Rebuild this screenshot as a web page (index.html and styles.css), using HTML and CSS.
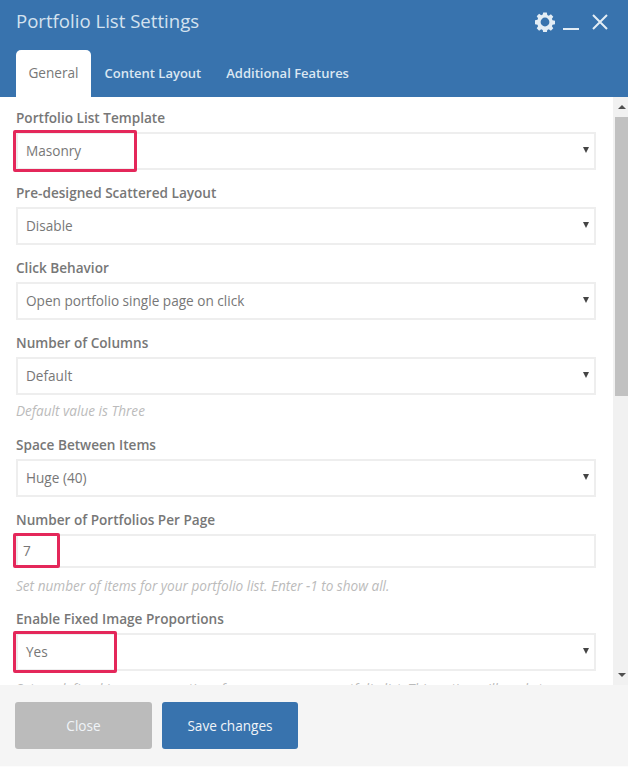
FILE: index.html
```html
<!DOCTYPE html>
<html>
<head>
	<meta charset="utf-8">
	<title>Portfolio List Settings</title>
	<link rel="stylesheet" href="styles.css">
</head>
<body>
	<div class="dialog">
		<div class="cabecera">
			<div class="titulo_fila">
				<span class="titulo">Portfolio List Settings</span>
				<div class="iconos">
					<svg class="icono" width="20" height="20" viewBox="0 0 20 20">
						<path fill="#e3edf5" fill-rule="evenodd" d="M8.2 0.6h3.6l0.5 2.5 1.5 0.6 2.1-1.4 2.4 2.4-1.4 2.1 0.6 1.5 2.5 0.5v3.4l-2.5 0.5-0.6 1.5 1.4 2.1-2.4 2.4-2.1-1.4-1.5 0.6-0.5 2.5H8.2l-0.5-2.5-1.5-0.6-2.1 1.4-2.4-2.4 1.4-2.1-0.6-1.5-2.5-0.5V8.3l2.5-0.5 0.6-1.5-1.4-2.1 2.4-2.4 2.1 1.4 1.5-0.6zM10 5.6a4.4 4.4 0 1 0 0 8.8 4.4 4.4 0 0 0 0-8.8z"/>
					</svg>
					<span class="minimizar"></span>
					<svg class="icono" width="18" height="18" viewBox="0 0 18 18">
						<path stroke="#e3edf5" stroke-width="2" fill="none" d="M2 2l14 14M16 2L2 16"/>
					</svg>
				</div>
			</div>
			<div class="tabs">
				<span class="tab activo">General</span>
				<span class="tab">Content Layout</span>
				<span class="tab">Additional Features</span>
			</div>
		</div>
		<div class="cuerpo">
			<div class="contenido">
				<div class="campo">
					<div class="etiq">Portfolio List Template</div>
					<div class="caja">Masonry<i class="flecha"></i><span class="marca marca_masonry"></span></div>
				</div>
				<div class="campo">
					<div class="etiq">Pre-designed Scattered Layout</div>
					<div class="caja">Disable<i class="flecha"></i></div>
				</div>
				<div class="campo">
					<div class="etiq">Click Behavior</div>
					<div class="caja">Open portfolio single page on click<i class="flecha"></i></div>
				</div>
				<div class="campo">
					<div class="etiq">Number of Columns</div>
					<div class="caja">Default<i class="flecha"></i></div>
					<div class="ayuda">Default value is Three</div>
				</div>
				<div class="campo">
					<div class="etiq">Space Between Items</div>
					<div class="caja">Huge (40)<i class="flecha"></i></div>
				</div>
				<div class="campo">
					<div class="etiq">Number of Portfolios Per Page</div>
					<div class="caja caja_texto">7<span class="marca marca_siete"></span></div>
					<div class="ayuda">Set number of items for your portfolio list. Enter -1 to show all.</div>
				</div>
				<div class="campo">
					<div class="etiq">Enable Fixed Image Proportions</div>
					<div class="caja">Yes<i class="flecha"></i><span class="marca marca_yes"></span></div>
					<div class="ayuda ayuda_cortada">Set predefined image proportions for your masonry portfolio list. This option will apply to</div>
				</div>
			</div>
			<div class="barra">
				<div class="barra_btn"><i class="flecha_arriba"></i></div>
				<div class="barra_pista"><div class="barra_thumb"></div></div>
				<div class="barra_btn"><i class="flecha_abajo"></i></div>
			</div>
		</div>
		<div class="pie">
			<button class="clsboton cerrar">Close</button>
			<button class="clsboton guardar">Save changes</button>
		</div>
	</div>
</body>
</html>
```

FILE: styles.css
```css
* {
	box-sizing: border-box;
}

html, body {
	margin: 0;
	height: 100%;
}

body {
	font-family: "Open Sans", sans-serif;
	background: white;
}

.dialog {
	width: 628px;
	height: 767px;
	display: flex;
	flex-flow: column;
}

.cabecera {
	height: 97px;
	flex: none;
	background: #3873ae;
	padding: 0 16px;
	display: flex;
	flex-flow: column;
	justify-content: space-between;
}

.titulo_fila {
	display: flex;
	justify-content: space-between;
	align-items: flex-start;
}

.titulo {
	margin-top: 8px;
	font-size: 18.6px;
	line-height: 26px;
	color: #d4e2ef;
}

.iconos {
	margin-top: 12px;
	display: flex;
	align-items: center;
	gap: 8px;
	margin-right: 3px;
}

.minimizar {
	width: 16px;
	height: 2px;
	margin-top: 14px;
	margin-right: 4px;
	background: #e3edf5;
}

.tabs {
	display: flex;
	height: 47px;
}

.tab {
	padding: 0 12.5px;
	font-size: 13px;
	font-weight: 600;
	line-height: 46px;
	color: #dbe7f2;
}

.tab.activo {
	width: 75px;
	margin-right: 1px;
	background: white;
	border-radius: 5px 5px 0 0;
	font-size: 13.6px;
	font-weight: 400;
	color: #777;
	text-align: center;
	padding: 0;
}

.cuerpo {
	flex: 1;
	min-height: 0;
	display: flex;
	overflow: hidden;
}

.contenido {
	flex: 1;
	padding: 1px 17px 0 16px;
}

.campo {
	padding-top: 11px;
	padding-bottom: 3px;
}

.etiq {
	font-size: 13.6px;
	font-weight: 600;
	line-height: 18px;
	color: #777;
	margin-bottom: 5px;
}

.caja {
	position: relative;
	height: 38px;
	padding: 0 8px;
	border: 2px solid #eeeeee;
	font-size: 13.6px;
	line-height: 34px;
	color: #777;
}

.caja_texto {
	height: 34px;
	line-height: 30px;
	padding: 0 5px;
}

.flecha {
	position: absolute;
	right: 5px;
	top: 13px;
	border-style: solid;
	border-width: 6px 3px 0;
	border-color: #444 transparent transparent;
}

.marca {
	position: absolute;
	top: -4px;
	left: -5px;
	bottom: -4px;
	border: 3px solid #e4275a;
	border-radius: 2px;
}

.marca_masonry {
	width: 124px;
}

.marca_siete {
	width: 47px;
	top: -3px;
	bottom: -2px;
}

.marca_yes {
	width: 104px;
}

.ayuda {
	margin: 7px 0 2px;
	font-size: 13.6px;
	font-style: italic;
	line-height: 18px;
	color: #bbb;
	white-space: nowrap;
}

.caja_texto + .ayuda {
	margin: 9px 0 1px;
}

.ayuda_cortada {
	margin-top: 9px;
}

.barra {
	width: 15px;
	flex: none;
	background: #f1f1f1;
	display: flex;
	flex-flow: column;
}

.barra_btn {
	height: 20px;
	flex: none;
	padding-left: 2px;
	display: flex;
	align-items: center;
	justify-content: center;
}

.flecha_arriba {
	border-style: solid;
	border-width: 0 4px 4px;
	border-color: transparent transparent #505050;
}

.flecha_abajo {
	border-style: solid;
	border-width: 4px 4px 0;
	border-color: #505050 transparent transparent;
}

.barra_pista {
	flex: 1;
	padding-left: 2px;
}

.barra_thumb {
	height: 279px;
	background: #c1c1c1;
}

.pie {
	height: 82px;
	flex: none;
	background: #f5f5f5;
	border-bottom: 1px solid #fcfcfc;
	padding: 17px 15px 0;
	display: flex;
	align-items: flex-start;
	gap: 10px;
}

.clsboton {
	width: 137px;
	height: 47px;
	border: 1px solid transparent;
	border-radius: 3px;
	font-family: "Open Sans", sans-serif;
	font-size: 13.6px;
	color: #f0f4f8;
}

.cerrar {
	background: #bbbbbb;
}

.guardar {
	width: 136px;
	background: #3873ae;
}
```
